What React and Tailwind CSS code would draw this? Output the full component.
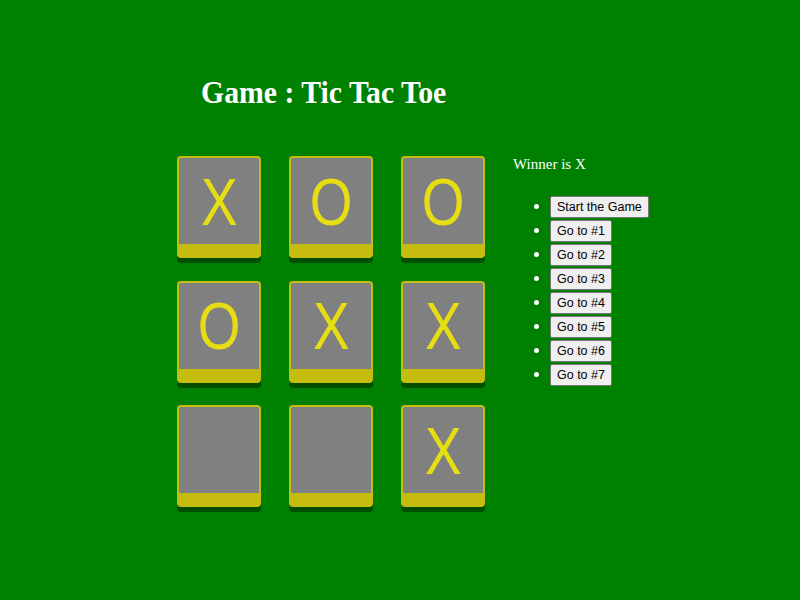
const squares = ["X", "O", "O", "O", "X", "X", null, null, "X"];
const moves = ["Start the Game", "Go to #1", "Go to #2", "Go to #3", "Go to #4", "Go to #5", "Go to #6", "Go to #7"];

const Square = ({ value }) => (
  <button className="w-[84px] h-[102px] flex items-center justify-center bg-[#808080] border-2 border-b-[14px] border-[#c6bc10] rounded-[4px] shadow-[0_5px_0_#004f00] p-0">
    <span
      className="inline-block scale-x-[0.82] text-[67px] leading-none text-[#e6de12]"
      style={{ fontFamily: '"Liberation Sans", Arial, sans-serif' }}
    >
      {value}
    </span>
  </button>
);

export default function App() {
  return (
    <div className="w-full h-screen bg-[#008000] pt-[74px] overflow-hidden" style={{ fontFamily: '"Liberation Serif", "Times New Roman", serif' }}>
      <h1 className="ml-[201px] inline-block origin-left scale-x-[0.93] text-[32px] font-bold leading-[37px] text-white">
        Game : Tic Tac Toe
      </h1>

      <div className="flex items-start mt-[45px]">
        {/* Board */}
        <div className="ml-[177px] grid grid-cols-3 gap-x-[28px] gap-y-[22.5px]">
          {squares.map((v, i) => (
            <Square key={i} value={v} />
          ))}
        </div>

        {/* Info */}
        <div className="ml-[28px] -mt-px text-white">
          <div className="text-[15px] leading-[18px]">Winner is X</div>
          <ul className="mt-[23px] pl-[37px] list-disc">
            {moves.map((m) => (
              <li key={m} className="mb-[2px] h-[22px] leading-[20px] marker:text-white">
                <button
                  className="h-[22px] px-[6px] bg-[#efefef] border border-[#767676] rounded-[2px] text-black text-[12.5px] leading-none align-top"
                  style={{ fontFamily: '"Liberation Sans", Arial, sans-serif' }}
                >
                  {m}
                </button>
              </li>
            ))}
          </ul>
        </div>
      </div>
    </div>
  );
}
